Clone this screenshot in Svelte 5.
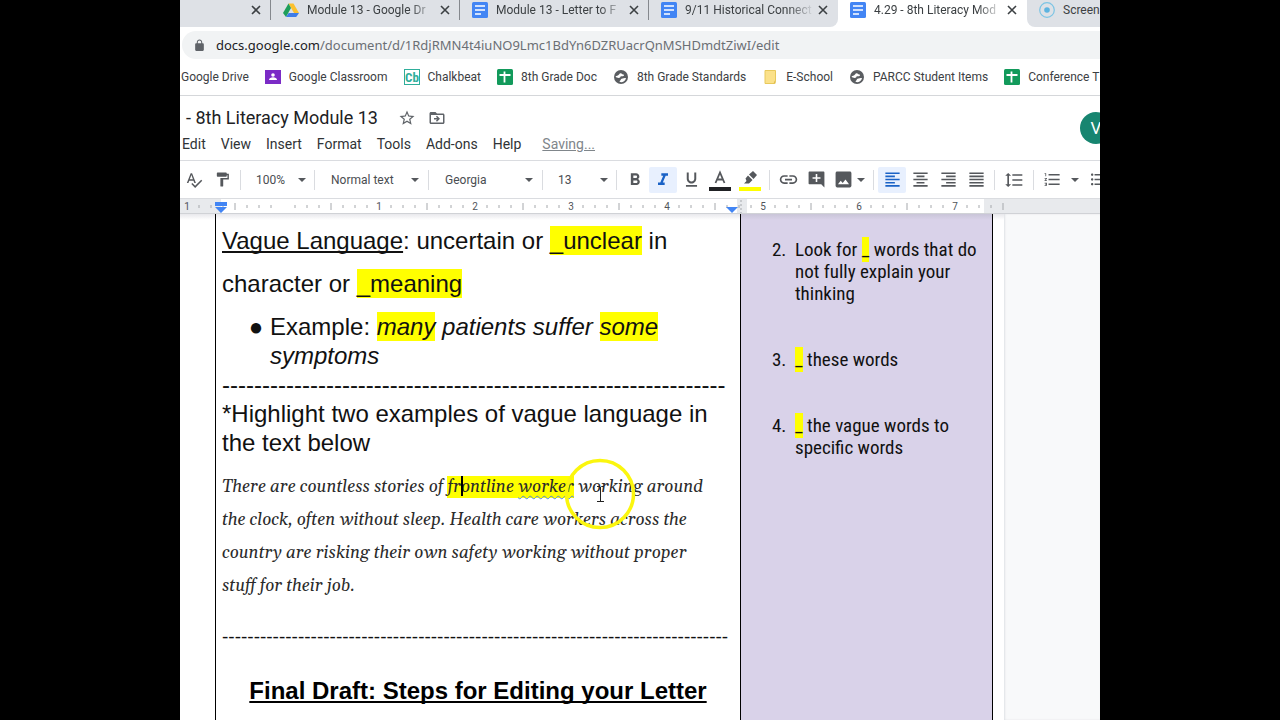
<script>
  const tabs = [
    { title: '', icon: '' },
    { title: 'Module 13 - Google Dr', icon: 'drive' },
    { title: 'Module 13 - Letter to F', icon: 'docs' },
    { title: '9/11 Historical Connect', icon: 'docs' },
    { title: '4.29 - 8th Literacy Mod', icon: 'docs', active: true },
    { title: 'Screen', icon: 'record' },
  ];

  const bookmarks = [
    { title: 'Google Drive', icon: '' },
    { title: 'Google Classroom', icon: 'classroom' },
    { title: 'Chalkbeat', icon: 'chalkbeat' },
    { title: '8th Grade Doc', icon: 'sheets' },
    { title: '8th Grade Standards', icon: 'globe' },
    { title: 'E-School', icon: 'note' },
    { title: 'PARCC Student Items', icon: 'globe' },
    { title: 'Conference T', icon: 'sheets' },
  ];

  const siteIcons = {
    drive: '<path d="M5.5 1.5h5L16 11h-5z" fill="#fbc02d"/><path d="M5.5 1.5L8 6 3 15 0 11z" fill="#1e9e5a"/><path d="M5.6 11H16l-2.8 4H3z" fill="#3f7de8"/>',
    docs: '<rect width="16" height="16" rx="1.5" fill="#4285f4"/><path d="M3 4h10M3 8h10M3 12h6" stroke="#fff" stroke-width="1.6"/>',
    record: '<circle cx="8" cy="8" r="7.3" fill="none" stroke="#7cc4e4" stroke-width="1.2"/><circle cx="8" cy="8" r="2.8" fill="#5db4e0"/>',
    classroom: '<rect y="1" width="16" height="14" fill="#7b2bc6"/><circle cx="8" cy="6" r="1.8" fill="#fff"/><path d="M4 11c0-2 2-2.8 4-2.8s4 .8 4 2.8z" fill="#fff"/>',
    sheets: '<rect width="16" height="16" rx="1.5" fill="#129a5b"/><path d="M2.5 6h11M7.5 2.5v11" stroke="#fff" stroke-width="1.8"/>',
    globe: '<circle cx="8" cy="8" r="7" fill="#5a5d61"/><path d="M2.500 7.500c1-.8 2.500-.5 3.500-2 .6-1 1.500-1.500 2.500-1 .3 1 1.500.8 2.500 1.200.3 1-1 1.500-2 1.500-1.200 0-2 .3-1.800 1.300-1.200.8-3.500.5-4.700-1z" fill="#fff"/><path d="M8.500 9.800c1.500-.3 2.800-.8 4.500-.8-.3 2-2 3.800-4.500 4.200-1.800 0-2.500-.9-1.500-1.400.9-.4.5-1.600 1.500-2z" fill="#fff"/>',
    note: '<path d="M3 1.500h10.500v10l-1 3H3z" fill="#fbe18a" stroke="#e8c95c"/><path d="M13.500 10.500v4h-2z" fill="#e0bd48"/>',
  };

  const menus = ['Edit', 'View', 'Insert', 'Format', 'Tools', 'Add-ons', 'Help'];

  const icons = {
    spell: 'M12.45 16h2.09L9.43 3H7.57L2.46 16h2.09l1.12-3h5.64l1.14 3zm-6.02-5L8.5 5.48 10.57 11H6.43zm15.16.59l-8.09 8.09L9.83 16l-1.41 1.41 5.09 5.09L23 13l-1.41-1.41z',
    paint: 'M18 4V3c0-.55-.45-1-1-1H5c-.55 0-1 .45-1 1v4c0 .55.45 1 1 1h12c.55 0 1-.45 1-1V6h1v4H9v11c0 .55.45 1 1 1h2c.55 0 1-.45 1-1v-9h8V4h-3z',
    bold: 'M15.6 10.79c.97-.67 1.65-1.77 1.65-2.79 0-2.26-1.75-4-4-4H7v14h7.04c2.09 0 3.71-1.7 3.71-3.79 0-1.52-.86-2.82-2.15-3.42zM10 6.500h3c.83 0 1.500.67 1.500 1.500s-.67 1.500-1.500 1.500h-3v-3zm3.500 9H10v-3h3.500c.83 0 1.500.67 1.500 1.500s-.67 1.500-1.500 1.500z',
    italic: 'M10 4v3h2.210l-3.420 8H6v3h8v-3h-2.210l3.420-8H18V4z',
    underline: 'M12 17c3.310 0 6-2.690 6-6V3h-2.500v8c0 1.930-1.570 3.500-3.500 3.500S8.500 12.930 8.500 11V3H6v8c0 3.310 2.690 6 6 6zm-7 2v2h14v-2H5z',
    link: 'M3.9 12c0-1.710 1.390-3.100 3.100-3.100h4V7H7c-2.760 0-5 2.240-5 5s2.240 5 5 5h4v-1.900H7c-1.710 0-3.100-1.390-3.100-3.100zM8 13h8v-2H8v2zm9-6h-4v1.900h4c1.710 0 3.100 1.390 3.100 3.100s-1.390 3.100-3.100 3.100h-4V17h4c2.760 0 5-2.240 5-5s-2.240-5-5-5z',
    comment: 'M22 3c0-.6-.4-1-1-1H3c-.6 0-1 .4-1 1v14c0 .6.4 1 1 1h15l4 4V3zM17 11h-4v4h-2v-4H7V9h4V5h2v4h4v2z',
    image: 'M22 20V4c0-1.100-.9-2-2-2H4c-1.100 0-2 .9-2 2v16c0 1.100.9 2 2 2h16c1.100 0 2-.9 2-2zM8.500 13.500l2.500 3.010L14.500 12l4.500 6H5l3.500-4.500z',
    left: 'M15 15H3v2h12v-2zm0-8H3v2h12V7zM3 13h18v-2H3v2zm0 8h18v-2H3v2zM3 3v2h18V3H3z',
    center: 'M7 15v2h10v-2H7zm-4 6h18v-2H3v2zm0-8h18v-2H3v2zm4-6v2h10V7H7zM3 3v2h18V3H3z',
    right: 'M3 21h18v-2H3v2zm6-4h12v-2H9v2zm-6-4h18v-2H3v2zm6-4h12V7H9v2zM3 3v2h18V3H3z',
    justify: 'M3 21h18v-2H3v2zm0-4h18v-2H3v2zm0-4h18v-2H3v2zm0-4h18V7H3v2zm0-6v2h18V3H3z',
    spacing: 'M6 7h2.500L5 3.500 1.500 7H4v10H1.500L5 20.500 8.500 17H6V7zm4-2v2h12V5H10zm0 14h12v-2H10v2zm0-6h12v-2H10v2z',
    numbered: 'M2 17h2v.5H3v1h1v.5H2v1h3v-4H2v1zm1-9h1V4H2v1h1v3zm-1 3h1.800L2 13.100v.9h3v-1H3.200L5 10.900V10H2v1zm5-6v2h14V5H7zm0 14h14v-2H7v2zm0-6h14v-2H7v2z',
    bulleted: 'M4 10.500c-.83 0-1.500.67-1.500 1.500s.67 1.500 1.500 1.500 1.500-.67 1.500-1.500-.67-1.500-1.500-1.500zm0-6c-.83 0-1.500.67-1.500 1.500S3.170 7.500 4 7.500 5.500 6.830 5.500 6 4.830 4.500 4 4.500zm0 12c-.83 0-1.500.68-1.500 1.500s.68 1.500 1.500 1.500 1.500-.68 1.500-1.500-.67-1.500-1.500-1.500zM7 19h14v-2H7v2zm0-6h14v-2H7v2zm0-8v2h14V5H7z',
    star: 'M22 9.240l-7.190-.62L12 2 9.190 8.630 2 9.240l5.460 4.730L5.820 21 12 17.270 18.180 21l-1.630-7.030L22 9.240zM12 15.400l-3.760 2.270 1-4.280-3.320-2.880 4.380-.38L12 6.100l1.710 4.040 4.380.38-3.320 2.880 1 4.280L12 15.400z',
    move: 'M20 6h-8l-2-2H4c-1.100 0-2 .9-2 2v12c0 1.100.9 2 2 2h16c1.100 0 2-.9 2-2V8c0-1.100-.9-2-2-2zm0 12H4V8h16v10zm-7.840-6H8v2h4.160l-1.590 1.590L11.990 17 16 13.010 11.990 9l-1.410 1.410L12.160 12z',
    lock: 'M18 8h-1V6c0-2.760-2.240-5-5-5S7 3.240 7 6v2H6c-1.100 0-2 .9-2 2v10c0 1.100.9 2 2 2h12c1.100 0 2-.9 2-2V10c0-1.100-.9-2-2-2zM15.100 8H8.900V6c0-1.710 1.390-3.100 3.100-3.100s3.100 1.390 3.100 3.100v2z',
  };

  const aligns = ['left', 'center', 'right', 'justify'];

  // ruler: one tick every eighth of an inch, zero sits at x = 103
  const ticks = [];
  for (let i = -8; i <= 75; i++) {
    const x = 103 + i * 12;
    if (x > 830) break;
    if (i !== 0) ticks.push({ x, i });
  }
</script>

{#snippet icon(name, size = 18)}
  <svg viewBox="0 0 24 24" width={size} height={size} fill="currentColor" aria-hidden="true">
    <path d={icons[name]} />
  </svg>
{/snippet}

{#snippet site(name)}
  <svg viewBox="0 0 16 16" width="16" height="16" aria-hidden="true">
    {#if name === 'chalkbeat'}
      <rect x="0.500" y="0.500" width="15" height="15" fill="#fff" stroke="#2fae9b" />
      <text x="8" y="12.500" text-anchor="middle" font-size="13" font-weight="700" fill="#2fae9b" font-family="Roboto Condensed, Liberation Sans Narrow, sans-serif">Cb</text>
    {:else}
      {@html siteIcons[name]}
    {/if}
  </svg>
{/snippet}

{#snippet picker(label, value, wide)}
  <label class="picker" class:wide>
    <select aria-label={label}>
      <option>{value}</option>
    </select>
    <i class="arrow"></i>
  </label>
{/snippet}

<div class="frame">
  <div class="screen">
    <header class="browser">
      <nav class="tabs" aria-label="Tabs">
        {#each tabs as tab, n}
          <div class="tab" class:active={tab.active} class:first={n === 0} class:before={tabs[n + 1]?.active} class:after={tabs[n - 1]?.active}>
            {#if tab.icon}
              {@render site(tab.icon)}
            {/if}
            <span class="tab-title">{tab.title}</span>
            {#if n < tabs.length - 1}
              <button class="close" aria-label="Close tab">
                <svg viewBox="0 0 10 10" width="10" height="10"><path d="M1 1l8 8M9 1L1 9" stroke="#3c4043" stroke-width="1.600" /></svg>
              </button>
            {/if}
          </div>
        {/each}
      </nav>

      <div class="address">
        <span class="lock">{@render icon('lock', 13)}</span>
        <span class="url">docs.google.com<em>/document/d/1RdjRMN4t4iuNO9Lmc1BdYn6DZRUacrQnMSHDmdtZiwI/edit</em></span>
      </div>

      <nav class="bookmarks" aria-label="Bookmarks">
        {#each bookmarks as mark}
          <a href="#top">
            {#if mark.icon}
              {@render site(mark.icon)}
            {/if}
            {mark.title}
          </a>
        {/each}
      </nav>
    </header>

    <div class="doc-header">
      <div class="title-row">
        <h1>- 8th Literacy Module 13</h1>
        <button aria-label="Star">{@render icon('star')}</button>
        <button aria-label="Move">{@render icon('move')}</button>
      </div>
      <div class="menu-row">
        {#each menus as menu}
          <button>{menu}</button>
        {/each}
        <a class="saving" href="#saving">Saving...</a>
      </div>
      <button class="avatar" aria-label="Account">V</button>
    </div>

    <div class="toolbar">
      <button aria-label="Spelling">{@render icon('spell')}</button>
      <button aria-label="Paint format">{@render icon('paint', 17)}</button>
      <hr />
      {@render picker('Zoom', '100%', false)}
      <hr />
      {@render picker('Styles', 'Normal text', true)}
      <hr />
      {@render picker('Font', 'Georgia', true)}
      <hr />
      {@render picker('Font size', '13', false)}
      <hr />
      <button aria-label="Bold">{@render icon('bold', 20)}</button>
      <button class="on" aria-label="Italic">{@render icon('italic', 20)}</button>
      <button aria-label="Underline">{@render icon('underline', 19)}</button>
      <button class="swatch" aria-label="Text color">
        <svg viewBox="0 0 22 24" width="22" height="24">
          <path d="M6.500 15L11 4.500 15.500 15M8 11.500h6" fill="none" stroke="#55585c" stroke-width="1.800" />
          <path d="M0 19h22v4H0z" fill="#202124" />
        </svg>
      </button>
      <button class="swatch" aria-label="Highlight color">
        <svg viewBox="0 0 22 24" width="22" height="24">
          <path d="M9 7.500l4.500 4.500-3.500 3.500H5l2.500-2.500-1-2.500z" fill="#55585c" />
          <path d="M10 6.500L14 3l4 4-3.500 4z" fill="#55585c" />
          <path d="M0 19h22v4H0z" fill="#ffff00" />
        </svg>
      </button>
      <hr />
      <button aria-label="Insert link">{@render icon('link', 21)}</button>
      <button aria-label="Add comment">{@render icon('comment', 19)}</button>
      <button class="with-arrow" aria-label="Insert image">{@render icon('image', 19)}<i class="arrow"></i></button>
      <hr />
      {#each aligns as align}
        <button class:on={align === 'left'} aria-label={`Align ${align}`}>{@render icon(align, 19)}</button>
      {/each}
      <hr />
      <button class="swatch" aria-label="Line spacing">{@render icon('spacing', 20)}</button>
      <hr />
      <button class="with-arrow list" aria-label="Numbered list">{@render icon('numbered', 19)}<i class="arrow"></i></button>
      <button aria-label="Bulleted list">{@render icon('bulleted', 19)}</button>
    </div>

    <div class="ruler">
      <svg width="100%" height="14">
        <rect x="41" width="516" height="14" fill="#fff" />
        <rect x="567" width="237" height="14" fill="#fff" />
        {#each ticks as { x, i }}
          {#if i % 8 === 0}
            <text {x} y="11" text-anchor="middle">{Math.abs(i / 8)}</text>
          {:else if i % 4 === 0}
            <path d="M{x} 4v7" />
          {:else}
            <path d="M{x} 6v3" />
          {/if}
        {/each}
        <path d="M561 1v13" stroke-dasharray="2 2" />
        <path class="marker" d="M35 3h12v4H35zM35 8h12l-6 6z" />
        <path class="marker" d="M546 8h12l-6 6z" />
      </svg>
    </div>

    <main class="page">
      <section class="notes">
        <p class="loose">
          <u>Vague Language</u>: uncertain or <mark>_unclear</mark> in<br />
          character or <mark>_meaning</mark>
        </p>
        <ul>
          <li>Example: <em><mark>many</mark> patients suffer <mark>some</mark> symptoms</em></li>
        </ul>
        <p>{'-'.repeat(63)}</p>
        <p>*Highlight two examples of vague language in the text below</p>
        <p class="passage">
          There are countless stories of <mark>fr<span class="caret"></span>ontline <span class="grammar">worker</span></mark> working around<br />
          the clock, often without sleep. Health care workers across the<br />
          country are risking their own safety working without proper<br />
          stuff for their job.
        </p>
        <p class="rule">{'-'.repeat(80)}</p>
        <h2>Final Draft: Steps for Editing your Letter</h2>
      </section>

      <aside class="steps">
        <ol start="2">
          <li>Look for <mark>_</mark> words that do<br />not fully explain your<br />thinking</li>
          <li><mark>_</mark> these words</li>
          <li><mark>_</mark> the vague words to<br />specific words</li>
        </ol>
      </aside>

      <svg class="pointer" width="72" height="72" viewBox="0 0 72 72" aria-hidden="true">
        <circle cx="36" cy="36" r="33.500" fill="none" stroke="#fbf60e" stroke-width="3.500" />
        <path d="M33 28.500h2.500l1 1 1-1H40M36.500 29v14M33 43.500h7" fill="none" stroke="#222" />
      </svg>
    </main>
  </div>
</div>

<style>
  :global(body) {
    background: #000;
  }

  .frame {
    padding: 0 180px;
    background: #000;
  }

  .screen {
    display: flex;
    flex-direction: column;
    min-height: 100vh;
    overflow: hidden;
    background: #fff;
    color: #3c4043;
    font-family: Roboto, 'Liberation Sans', sans-serif;
  }

  button {
    display: flex;
    align-items: center;
    justify-content: center;
    flex: none;
    padding: 0;
    border: 0;
    background: none;
    color: inherit;
    font: inherit;
  }

  svg {
    display: block;
    flex: none;
  }

  .browser {
    border-bottom: 1px solid #d5d7da;
    font-size: 12px;
  }

  .tabs {
    display: flex;
    height: 27px;
  }

  .tab {
    position: relative;
    display: flex;
    align-items: center;
    flex: none;
    gap: 8px;
    box-sizing: border-box;
    width: 189px;
    padding: 0 10px 7px 12px;
    background: #dee1e6;
  }

  .tab:not(.active, .before, .after)::after {
    content: '';
    position: absolute;
    top: 0;
    right: 0;
    width: 1px;
    height: 20px;
    background: #85888d;
  }

  .tab.first {
    width: 91px;
  }

  .tab.active {
    background: #fff;
  }

  /* neighbours of the active tab round off towards it */
  .tab.before {
    border-bottom-right-radius: 8px;
  }

  .tab.after {
    border-bottom-left-radius: 8px;
  }

  .tab-title {
    flex: 1;
    margin-right: -4px;
    overflow: hidden;
    white-space: nowrap;
    mask-image: linear-gradient(to right, #000 80%, transparent);
  }

  .tab.after .tab-title {
    overflow: visible;
    mask-image: none;
  }

  .address {
    display: flex;
    align-items: center;
    gap: 10px;
    height: 28px;
    margin: 4px 0 3px 2px;
    padding-left: 11px;
    border-radius: 14px 0 0 14px;
    background: #f1f3f4;
    font-family: 'Noto Sans', 'Open Sans', sans-serif;
    font-size: 13px;
  }

  .lock {
    color: #5f6368;
  }

  .url {
    color: #202124;
    white-space: nowrap;
  }

  .url em {
    color: #6b6f74;
    font-style: normal;
  }

  .bookmarks {
    display: flex;
    align-items: center;
    gap: 16px;
    box-sizing: border-box;
    height: 33px;
    padding: 0 0 3px 1px;
    white-space: nowrap;
  }

  .bookmarks a {
    display: flex;
    align-items: center;
    gap: 8px;
    flex: none;
    color: inherit;
    text-decoration: none;
  }

  .doc-header {
    position: relative;
    display: flex;
    flex-direction: column;
    height: 64px;
    border-bottom: 1px solid #dadce0;
  }

  .title-row {
    display: flex;
    align-items: center;
    gap: 12px;
    height: 27px;
    margin-top: 8px;
    padding-left: 6px;
    color: #5f6368;
  }

  h1 {
    margin: 0 8px 0 0;
    color: #202124;
    font-size: 18px;
    font-weight: 400;
  }

  .menu-row {
    display: flex;
    align-items: center;
    gap: 15px;
    height: 26px;
    padding-left: 2px;
    font-size: 14px;
    color: #303336;
  }

  .saving {
    margin-left: 6px;
    color: #80868b;
  }

  .avatar {
    position: absolute;
    top: 16px;
    right: -12px;
    width: 32px;
    height: 32px;
    border-radius: 50%;
    background: #178570;
    color: #fff;
    font-size: 17px;
  }

  .toolbar {
    display: flex;
    align-items: center;
    height: 37px;
    border-bottom: 1px solid #dadce0;
    color: #55585c;
  }

  .toolbar button {
    width: 28px;
    height: 26px;
    border-radius: 2px;
  }

  .toolbar button.on {
    background: #e8f0fe;
    color: #1a62c6;
  }

  .toolbar button.swatch {
    width: 30px;
  }

  .toolbar button.with-arrow {
    width: 39px;
    gap: 4px;
  }

  .toolbar button.list {
    width: 46px;
    gap: 9px;
  }

  hr {
    flex: none;
    width: 1px;
    height: 20px;
    margin: 0 4px;
    border: 0;
    background: #dadce0;
  }

  .picker {
    display: flex;
    align-items: center;
    flex: none;
    box-sizing: border-box;
    width: 65px;
    padding: 0 4px 0 11px;
  }

  .picker.wide {
    width: 105px;
    padding: 0 5px 0 12px;
  }

  select {
    flex: 1;
    min-width: 0;
    padding: 0;
    border: 0;
    appearance: none;
    background: none;
    color: #4a4d51;
    font: inherit;
    font-size: 12px;
  }

  .arrow {
    flex: none;
    border: 4px solid transparent;
    border-top-color: currentColor;
    border-bottom: 0;
  }

  .ruler {
    background: #e8eaed;
    border-bottom: 1px solid #d0d2d6;
  }

  .ruler svg path {
    stroke: #a5a8ac;
  }

  .ruler svg text {
    fill: #50545a;
    font-size: 10px;
  }

  .ruler svg .marker {
    fill: #4285f4;
    stroke: none;
  }

  .page {
    position: relative;
    display: grid;
    flex: 1;
    grid-template-columns: 35px minmax(0, 526fr) minmax(0, 252fr) 11px 96px;
    background: linear-gradient(#e8e8ec, transparent 6px), #fff;
    color: #111;
  }

  .page::after {
    content: '';
    grid-column: 5;
    background: #f8f9fa;
    box-shadow: inset 1px 0 2px #dfe1e5;
  }

  .notes {
    grid-column: 2;
    padding: 5px 6px 0;
    border: solid #000;
    border-width: 0 1px;
    font: 24px/29px 'Liberation Sans', Arial, sans-serif;
  }

  .notes p {
    margin: 0;
  }

  .notes .loose {
    margin-bottom: 7px;
    line-height: 43px;
  }

  u,
  h2 {
    text-decoration: underline;
    text-decoration-thickness: 2px;
    text-underline-offset: 2px;
    text-decoration-skip-ink: none;
  }

  mark {
    padding: 1px 0;
    background: #ffff00;
    color: inherit;
  }

  ul {
    margin: 0;
    padding-left: 48px;
  }

  ul li::marker {
    content: '●\00a0';
  }

  .notes .passage {
    margin-top: 14px;
    color: #2b2b2b;
    font: italic 17px/33px Georgia, Gelasio, 'Liberation Serif', serif;
    white-space: nowrap;
  }

  .passage mark {
    padding: 0;
  }

  .caret {
    position: relative;
  }

  .caret::before {
    content: '';
    position: absolute;
    top: 0;
    left: 0;
    width: 2px;
    height: 20px;
    background: #000;
  }

  .grammar {
    text-decoration: underline wavy #4f87d8 1px;
    text-underline-offset: 3px;
  }

  .notes .rule {
    margin: 19px 0 25px;
    font-size: 19px;
  }

  h2 {
    margin: 0;
    color: #000;
    font-size: 24px;
    text-align: center;
    white-space: nowrap;
  }

  .steps {
    grid-column: 3;
    border-right: 1px solid #000;
    background: linear-gradient(#c9c5d8, transparent 6px), #d9d2e9;
    font: 19px/22px 'Roboto Condensed', 'Liberation Sans Narrow', Roboto, sans-serif;
  }

  .steps ol {
    margin: 25px 0 0;
    padding-left: 54px;
  }

  .steps li {
    margin-bottom: 44px;
    white-space: nowrap;
  }

  .steps li::marker {
    content: counter(list-item) '.\00a0\00a0';
  }

  .pointer {
    position: absolute;
    top: 244px;
    left: 384px;
  }
</style>
